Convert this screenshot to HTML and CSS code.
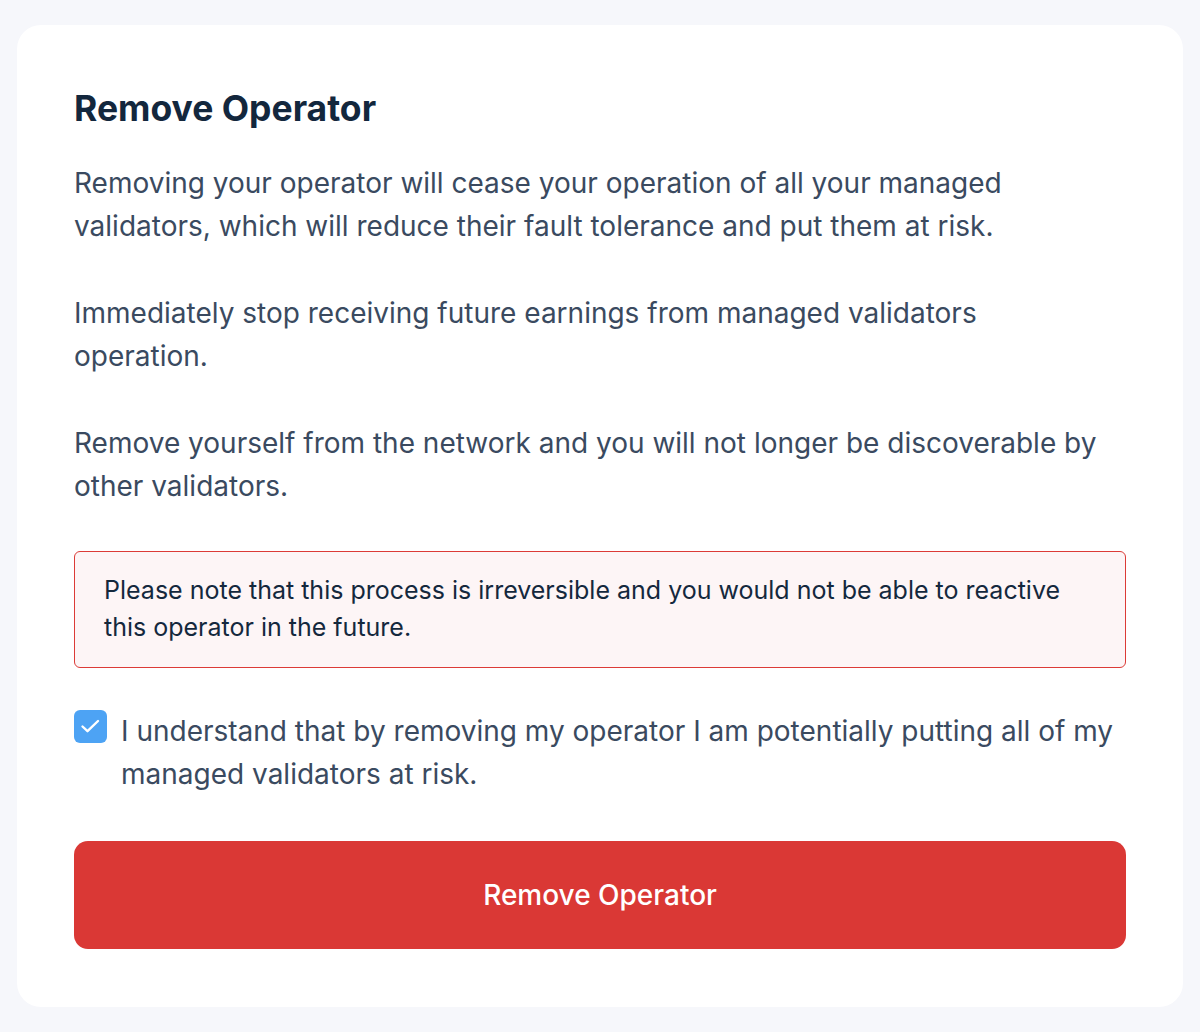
FILE: index.html
```html
<!DOCTYPE html>
<html lang="en">
<head>
<meta charset="utf-8">
<title>Remove Operator</title>
<link rel="stylesheet" href="styles.css">
</head>
<body>
<main class="card">
  <h1 class="title">Remove Operator</h1>
  <p class="text">Removing your operator will cease your operation of all your managed validators, which will reduce their fault tolerance and put them at risk.</p>
  <p class="text">Immediately stop receiving future earnings from managed validators operation.</p>
  <p class="text">Remove yourself from the network and you will not longer be discoverable by other validators.</p>
  <div class="warning">Please note that this process is irreversible and you would not be able to reactive this operator in the future.</div>
  <label class="confirm">
    <span class="checkbox">
      <svg width="33" height="33" viewBox="0 0 33 33" fill="none"><path d="M8.5 16.5l5 4.7L24 11" stroke="#fff" stroke-width="2.4" stroke-linecap="round" stroke-linejoin="round"/></svg>
    </span>
    <span class="confirm-text">I understand that by removing my operator I am potentially putting all of my managed validators at risk.</span>
  </label>
  <button class="remove-btn" type="button">Remove Operator</button>
</main>
</body>
</html>
```
FILE: styles.css
```css
html, body {
  margin: 0;
  padding: 0;
  background: #f6f7fb;
}
body {
  font-family: Inter, "Noto Sans", sans-serif;
  padding: 25px 17px 26px;
}
.card {
  background: #ffffff;
  border-radius: 24px;
  padding: 62px 57px 58px;
  display: flex;
  flex-direction: column;
}
.title {
  margin: 0 0 31px;
  font-size: 35.5px;
  line-height: 44px;
  font-weight: 700;
  color: #13273d;
}
.text {
  margin: 0 0 44px;
  max-width: 1032px;
  font-size: 28px;
  line-height: 43px;
  color: #3a4a60;
}
.text:last-of-type {
  margin-bottom: 43px;
}
.warning {
  border: 1px solid #dc3b37;
  border-radius: 6px;
  background: #fdf5f6;
  padding: 20px 29px 21px;
  font-size: 25px;
  line-height: 37px;
  color: #14283d;
}
.confirm {
  margin-top: 42px;
  display: flex;
  gap: 14px;
  align-items: flex-start;
}
.checkbox {
  flex: none;
  width: 33px;
  height: 33px;
  border-radius: 6px;
  background: #4da3f4;
  display: flex;
}
.confirm-text {
  font-size: 28px;
  line-height: 43px;
  color: #3a4a60;
}
.remove-btn {
  margin-top: 45px;
  height: 108px;
  border: none;
  border-radius: 14px;
  background: #da3835;
  color: #ffffff;
  font-family: inherit;
  font-size: 28px;
  font-weight: 500;
}
```
